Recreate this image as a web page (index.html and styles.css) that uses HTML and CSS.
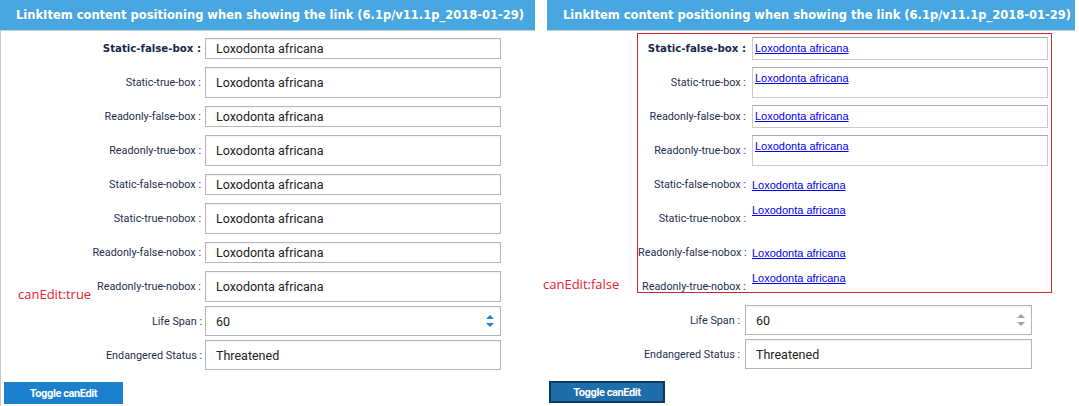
FILE: index.html
```html
<!DOCTYPE html>
<html>
<head>
<meta charset="utf-8">
<link rel="stylesheet" href="styles.css">
</head>
<body>
<div class="page">
  <section class="panel panel-edit">
    <header class="panel-title">LinkItem content positioning when showing the link (6.1p/v11.1p_2018-01-29)</header>
    <div class="panel-body">
      <div class="upper">
        <div class="tag">canEdit:true</div>
        <div class="frame">
          <div class="row short"><span class="lbl lbl-bold">Static-false-box :</span><div class="box">Loxodonta africana</div></div>
          <div class="row tall"><span class="lbl">Static-true-box :</span><div class="box">Loxodonta africana</div></div>
          <div class="row short"><span class="lbl">Readonly-false-box :</span><div class="box">Loxodonta africana</div></div>
          <div class="row tall"><span class="lbl">Readonly-true-box :</span><div class="box">Loxodonta africana</div></div>
          <div class="row short"><span class="lbl">Static-false-nobox :</span><div class="box">Loxodonta africana</div></div>
          <div class="row tall"><span class="lbl">Static-true-nobox :</span><div class="box">Loxodonta africana</div></div>
          <div class="row short"><span class="lbl">Readonly-false-nobox :</span><div class="box">Loxodonta africana</div></div>
          <div class="row tall"><span class="lbl">Readonly-true-nobox :</span><div class="box">Loxodonta africana</div></div>
        </div>
      </div>
      <div class="lower">
        <div class="lrow"><span class="llbl">Life Span :</span><div class="box lbox spin">60<svg class="spinner" width="10" height="14" viewBox="0 0 10 14"><path d="M1 5 L5 1 L9 5 Z M1 9 L9 9 L5 13 Z"/></svg></div></div>
        <div class="lrow"><span class="llbl">Endangered Status :</span><div class="box lbox">Threatened</div></div>
      </div>
      <button class="toggle">Toggle canEdit</button>
    </div>
  </section>

  <section class="panel panel-view">
    <header class="panel-title">LinkItem content positioning when showing the link (6.1p/v11.1p_2018-01-29)</header>
    <div class="panel-body">
      <div class="upper">
        <div class="tag">canEdit:false</div>
        <div class="frame">
          <div class="row short"><span class="lbl lbl-bold">Static-false-box :</span><div class="vbox"><a href="#">Loxodonta africana</a></div></div>
          <div class="row tall"><span class="lbl">Static-true-box :</span><div class="vbox"><a href="#">Loxodonta africana</a></div></div>
          <div class="row short"><span class="lbl">Readonly-false-box :</span><div class="vbox"><a href="#">Loxodonta africana</a></div></div>
          <div class="row tall"><span class="lbl">Readonly-true-box :</span><div class="vbox"><a href="#">Loxodonta africana</a></div></div>
          <div class="row short"><span class="lbl">Static-false-nobox :</span><div class="nobox"><a href="#">Loxodonta africana</a></div></div>
          <div class="row tall"><span class="lbl">Static-true-nobox :</span><div class="nobox nobox-top"><a href="#">Loxodonta africana</a></div></div>
          <div class="row short"><span class="lbl">Readonly-false-nobox :</span><div class="nobox"><a href="#">Loxodonta africana</a></div></div>
          <div class="row tall"><span class="lbl">Readonly-true-nobox :</span><div class="nobox nobox-top"><a href="#">Loxodonta africana</a></div></div>
        </div>
      </div>
      <div class="lower">
        <div class="lrow"><span class="llbl">Life Span :</span><div class="box lbox spin">60<svg class="spinner" width="10" height="14" viewBox="0 0 10 14"><path d="M1 5 L5 1 L9 5 Z M1 9 L9 9 L5 13 Z"/></svg></div></div>
        <div class="lrow"><span class="llbl">Endangered Status :</span><div class="box lbox">Threatened</div></div>
      </div>
      <button class="toggle">Toggle canEdit</button>
    </div>
  </section>
</div>
</body>
</html>
```

FILE: styles.css
```css
html, body {
  margin: 0;
  padding: 0;
  background: #fff;
}
body {
  font-family: Roboto, "Liberation Sans", sans-serif;
  width: 1079px;
  height: 406px;
  overflow: hidden;
}
.page {
  display: flex;
  gap: 12px;
}
.panel-edit { width: 535px; }
.panel-view { width: 528px; }

.panel-title {
  height: 30px;
  background: #48a7e0;
  border-bottom: 1px solid #cfcfcf;
  color: #fff;
  font-family: "DejaVu Sans", sans-serif;
  font-weight: bold;
  font-size: 11.5px;
  line-height: 30px;
  padding-left: 16px;
  white-space: nowrap;
  overflow: hidden;
}
.panel-body {
  height: 375px;
  display: flex;
  flex-direction: column;
}
.panel-edit .panel-body { border-left: 1px solid #c8c8c8; }

.upper {
  display: flex;
  margin-top: 2px;
}
.tag {
  font-family: "Open Sans", sans-serif;
  font-size: 13px;
  line-height: 18px;
  color: #e8202c;
  align-self: flex-end;
  white-space: nowrap;
}
.panel-edit .tag { width: 72px; margin-left: 17px; }
.panel-view .tag { width: 86px; margin-left: -4px; margin-right: 8px; }

.frame {
  width: 415px;
  box-sizing: border-box;
  border: 1px solid transparent;
  padding: 4px 3px 0 0;
  display: flex;
  flex-direction: column;
  gap: 8px;
}
.panel-view .frame {
  border-color: #d8262c;
  height: 260px;
}
.row {
  display: flex;
  flex: none;
  align-items: center;
  gap: 4px;
}
.row.short { height: 21px; }
.row.tall { height: 31px; }
.lbl {
  width: 110px;
  flex: none;
  text-align: right;
  font-size: 10.8px;
  color: #1d2e52;
  white-space: nowrap;
}
.panel-view .lbl { padding-right: 2px; box-sizing: border-box; }
.lbl-bold {
  font-family: "DejaVu Sans", sans-serif;
  font-weight: bold;
  font-size: 10.2px;
  color: #16284a;
}
.box {
  width: 296px;
  height: 100%;
  box-sizing: border-box;
  border: 1px solid #b5b5b5;
  box-shadow: inset 0 1px 2px rgba(0,0,0,0.06);
  padding-left: 10px;
  display: flex;
  align-items: center;
  font-size: 12.5px;
  color: #222;
}
.vbox {
  width: 296px;
  height: 100%;
  box-sizing: border-box;
  border: 1px solid #cbcbcb;
  border-top-color: #a9a9a9;
  padding: 3px 0 0 2px;
  align-self: stretch;
  line-height: 14px;
}
.row.short .vbox { height: 23px; margin: -1px 0; }
.nobox {
  width: 296px;
  box-sizing: border-box;
  line-height: 14px;
}
.nobox-top { align-self: flex-start; }
a {
  font-family: "Liberation Sans", Arial, sans-serif;
  font-size: 11px;
  line-height: 14px;
  color: #0000ee;
  text-decoration: underline;
  display: block;
  width: fit-content;
}

.lower {
  display: flex;
  flex-direction: column;
  gap: 4px;
}
.panel-edit .lower { margin-top: 3px; }
.panel-view .lower { margin-top: 12px; }
.lrow {
  display: flex;
  height: 30px;
  align-items: center;
}
.llbl {
  flex: none;
  text-align: right;
  font-size: 10.8px;
  color: #1d2e52;
  white-space: nowrap;
}
.panel-edit .llbl { width: 201px; margin-right: 3px; }
.panel-view .llbl { width: 193px; margin-right: 5px; }
.lbox { height: 30px; }
.panel-view .lbox { width: 287px; }
.spin { justify-content: space-between; padding-right: 5px; }
.spinner { display: block; }
.panel-edit .spinner path { fill: #2a7fd0; }
.panel-view .spinner path { fill: #a3a3a3; }

.toggle {
  margin-top: 12px;
  height: 22px;
  box-sizing: border-box;
  border: none;
  color: #fff;
  font-family: Roboto, sans-serif;
  font-weight: bold;
  font-size: 11px;
  letter-spacing: -0.4px;
  padding: 0;
  align-self: flex-start;
}
.panel-edit .toggle {
  width: 119px;
  margin-left: 3px;
  background: #1b80cd;
}
.panel-view .toggle {
  width: 116px;
  margin-left: 2px;
  background: #1e6eac;
  border: 2px solid #0d3a62;
}
```
